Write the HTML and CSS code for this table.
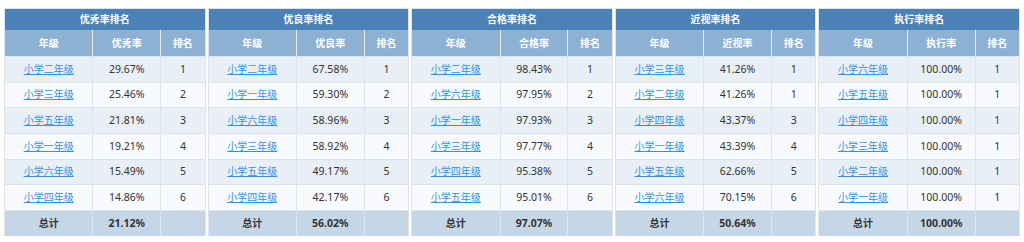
FILE: index.html
```html
<!DOCTYPE html>
<html lang="zh-CN">
<head>
<meta charset="utf-8">
<title>排名</title>
<link rel="stylesheet" href="styles.css">
</head>
<body>
<div class="board">
  <table class="rank">
    <colgroup><col class="c1"><col class="c2"><col class="c3"></colgroup>
    <thead>
      <tr><th class="title" colspan="3">优秀率排名</th></tr>
      <tr class="head"><th>年级</th><th>优秀率</th><th>排名</th></tr>
    </thead>
    <tbody>
      <tr><td><a href="#">小学二年级</a></td><td>29.67%</td><td>1</td></tr>
      <tr><td><a href="#">小学三年级</a></td><td>25.46%</td><td>2</td></tr>
      <tr><td><a href="#">小学五年级</a></td><td>21.81%</td><td>3</td></tr>
      <tr><td><a href="#">小学一年级</a></td><td>19.21%</td><td>4</td></tr>
      <tr><td><a href="#">小学六年级</a></td><td>15.49%</td><td>5</td></tr>
      <tr><td><a href="#">小学四年级</a></td><td>14.86%</td><td>6</td></tr>
      <tr class="total"><td>总计</td><td>21.12%</td><td></td></tr>
    </tbody>
  </table>
  <table class="rank">
    <colgroup><col class="c1"><col class="c2"><col class="c3"></colgroup>
    <thead>
      <tr><th class="title" colspan="3">优良率排名</th></tr>
      <tr class="head"><th>年级</th><th>优良率</th><th>排名</th></tr>
    </thead>
    <tbody>
      <tr><td><a href="#">小学二年级</a></td><td>67.58%</td><td>1</td></tr>
      <tr><td><a href="#">小学一年级</a></td><td>59.30%</td><td>2</td></tr>
      <tr><td><a href="#">小学六年级</a></td><td>58.96%</td><td>3</td></tr>
      <tr><td><a href="#">小学三年级</a></td><td>58.92%</td><td>4</td></tr>
      <tr><td><a href="#">小学五年级</a></td><td>49.17%</td><td>5</td></tr>
      <tr><td><a href="#">小学四年级</a></td><td>42.17%</td><td>6</td></tr>
      <tr class="total"><td>总计</td><td>56.02%</td><td></td></tr>
    </tbody>
  </table>
  <table class="rank">
    <colgroup><col class="c1"><col class="c2"><col class="c3"></colgroup>
    <thead>
      <tr><th class="title" colspan="3">合格率排名</th></tr>
      <tr class="head"><th>年级</th><th>合格率</th><th>排名</th></tr>
    </thead>
    <tbody>
      <tr><td><a href="#">小学二年级</a></td><td>98.43%</td><td>1</td></tr>
      <tr><td><a href="#">小学六年级</a></td><td>97.95%</td><td>2</td></tr>
      <tr><td><a href="#">小学一年级</a></td><td>97.93%</td><td>3</td></tr>
      <tr><td><a href="#">小学三年级</a></td><td>97.77%</td><td>4</td></tr>
      <tr><td><a href="#">小学四年级</a></td><td>95.38%</td><td>5</td></tr>
      <tr><td><a href="#">小学五年级</a></td><td>95.01%</td><td>6</td></tr>
      <tr class="total"><td>总计</td><td>97.07%</td><td></td></tr>
    </tbody>
  </table>
  <table class="rank">
    <colgroup><col class="c1"><col class="c2"><col class="c3"></colgroup>
    <thead>
      <tr><th class="title" colspan="3">近视率排名</th></tr>
      <tr class="head"><th>年级</th><th>近视率</th><th>排名</th></tr>
    </thead>
    <tbody>
      <tr><td><a href="#">小学三年级</a></td><td>41.26%</td><td>1</td></tr>
      <tr><td><a href="#">小学二年级</a></td><td>41.26%</td><td>1</td></tr>
      <tr><td><a href="#">小学四年级</a></td><td>43.37%</td><td>3</td></tr>
      <tr><td><a href="#">小学一年级</a></td><td>43.39%</td><td>4</td></tr>
      <tr><td><a href="#">小学五年级</a></td><td>62.66%</td><td>5</td></tr>
      <tr><td><a href="#">小学六年级</a></td><td>70.15%</td><td>6</td></tr>
      <tr class="total"><td>总计</td><td>50.64%</td><td></td></tr>
    </tbody>
  </table>
  <table class="rank">
    <colgroup><col class="c1"><col class="c2"><col class="c3"></colgroup>
    <thead>
      <tr><th class="title" colspan="3">执行率排名</th></tr>
      <tr class="head"><th>年级</th><th>执行率</th><th>排名</th></tr>
    </thead>
    <tbody>
      <tr><td><a href="#">小学六年级</a></td><td>100.00%</td><td>1</td></tr>
      <tr><td><a href="#">小学五年级</a></td><td>100.00%</td><td>1</td></tr>
      <tr><td><a href="#">小学四年级</a></td><td>100.00%</td><td>1</td></tr>
      <tr><td><a href="#">小学三年级</a></td><td>100.00%</td><td>1</td></tr>
      <tr><td><a href="#">小学二年级</a></td><td>100.00%</td><td>1</td></tr>
      <tr><td><a href="#">小学一年级</a></td><td>100.00%</td><td>1</td></tr>
      <tr class="total"><td>总计</td><td>100.00%</td><td></td></tr>
    </tbody>
  </table>
</div>
</body>
</html>
```

FILE: styles.css
```css
html, body {
  margin: 0;
  padding: 0;
  background: #ffffff;
}
body {
  font-family: "Noto Sans", "Noto Sans CJK SC", sans-serif;
  font-size: 10.5px;
  color: #333333;
}
.board {
  display: grid;
  grid-template-columns: repeat(5, 1fr);
  gap: 4px;
  padding: 9px 5px 0 5px;
}
.rank {
  width: 100%;
  border-collapse: collapse;
  table-layout: fixed;
  outline: 1px solid #dfe3e8;
}
.c1 { width: 44%; }
.c2 { width: 34%; }
.c3 { width: 22%; }
.rank th, .rank td {
  text-align: center;
  padding: 0;
  line-height: 13px;
}
.rank .title {
  background: #4a82b8;
  color: #ffffff;
  font-weight: bold;
  font-size: 10px;
  height: 21px;
}
.rank .head th {
  background: #8db1d3;
  color: #ffffff;
  font-weight: bold;
  font-size: 10px;
  height: 26px;
  border-left: 1px solid #e6edf4;
}
.rank .head th:first-child { border-left: none; }
.rank td {
  height: 24.66px;
  border-top: 1px solid #dde4ec;
  border-left: 1px solid #dde4ec;
}
.rank td:first-child { border-left: none; }
.rank tbody tr:nth-child(odd) td { background: #e9eff7; }
.rank tbody tr:nth-child(even) td { background: #f8fafd; }
.rank tbody tr.total td {
  background: #c5d7e7;
  font-weight: bold;
  border-left-color: #dde4ec;
}
.rank a {
  color: #2f93e6;
  text-decoration: underline;
  font-size: 10px;
}
.rank tr.total td:first-child {
  font-size: 10px;
}
```
